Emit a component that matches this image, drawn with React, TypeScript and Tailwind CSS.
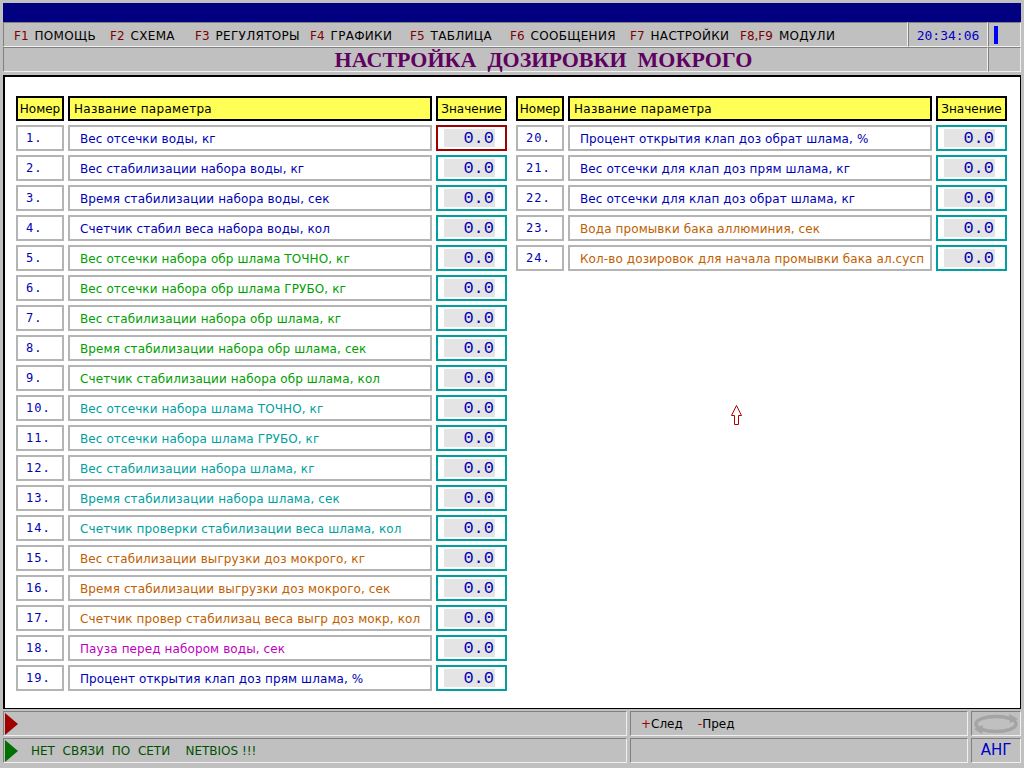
import React from "react";

type Row = { n: string; text: string; color: string };

const BLUE = "text-[#0000b4]";
const GREEN = "text-[#00a000]";
const TEAL = "text-[#00a0a0]";
const ORANGE = "text-[#c06000]";
const MAGENTA = "text-[#c000c0]";

const leftRows: Row[] = [
  { n: "1.", text: "Вес отсечки воды, кг", color: BLUE },
  { n: "2.", text: "Вес стабилизации набора воды, кг", color: BLUE },
  { n: "3.", text: "Время стабилизации набора воды, сек", color: BLUE },
  { n: "4.", text: "Счетчик стабил веса набора воды, кол", color: BLUE },
  { n: "5.", text: "Вес отсечки набора обр шлама ТОЧНО, кг", color: GREEN },
  { n: "6.", text: "Вес отсечки набора обр шлама ГРУБО, кг", color: GREEN },
  { n: "7.", text: "Вес стабилизации набора обр шлама, кг", color: GREEN },
  { n: "8.", text: "Время стабилизации набора обр шлама, сек", color: GREEN },
  { n: "9.", text: "Счетчик стабилизации набора обр шлама, кол", color: GREEN },
  { n: "10.", text: "Вес отсечки набора шлама ТОЧНО, кг", color: TEAL },
  { n: "11.", text: "Вес отсечки набора шлама ГРУБО, кг", color: TEAL },
  { n: "12.", text: "Вес стабилизации набора шлама, кг", color: TEAL },
  { n: "13.", text: "Время стабилизации набора шлама, сек", color: TEAL },
  { n: "14.", text: "Счетчик проверки стабилизации веса шлама, кол", color: TEAL },
  { n: "15.", text: "Вес стабилизации выгрузки доз мокрого, кг", color: ORANGE },
  { n: "16.", text: "Время стабилизации выгрузки доз мокрого, сек", color: ORANGE },
  { n: "17.", text: "Счетчик провер стабилизац веса выгр доз мокр, кол", color: ORANGE },
  { n: "18.", text: "Пауза перед набором воды, сек", color: MAGENTA },
  { n: "19.", text: "Процент открытия клап доз прям шлама, %", color: BLUE },
];

const rightRows: Row[] = [
  { n: "20.", text: "Процент открытия клап доз обрат шлама, %", color: BLUE },
  { n: "21.", text: "Вес отсечки для клап доз прям шлама, кг", color: BLUE },
  { n: "22.", text: "Вес отсечки для клап доз обрат шлама, кг", color: BLUE },
  { n: "23.", text: "Вода промывки бака аллюминия, сек", color: ORANGE },
  { n: "24.", text: "Кол-во дозировок для начала промывки бака ал.сусп", color: ORANGE },
];

const menu = [
  { k: "F1", label: "ПОМОЩЬ", w: "w-[96px]" },
  { k: "F2", label: "СХЕМА", w: "w-[85px]" },
  { k: "F3", label: "РЕГУЛЯТОРЫ", w: "w-[115px]" },
  { k: "F4", label: "ГРАФИКИ", w: "w-[100px]" },
  { k: "F5", label: "ТАБЛИЦА", w: "w-[100px]" },
  { k: "F6", label: "СООБЩЕНИЯ", w: "w-[120px]" },
  { k: "F7", label: "НАСТРОЙКИ", w: "w-[110px]" },
  { k: "F8,F9", label: "МОДУЛИ", w: "w-[120px]" },
];

const sunken = "border border-t-[#808080] border-l-[#808080] border-b-[#f0f0f0] border-r-[#f0f0f0]";

function Table({ rows, first }: { rows: Row[]; first?: boolean }) {
  return (
    <div className="flex flex-col gap-[4px] w-[491px]">
      <div className="flex gap-[4px] h-[26px] text-[12px] text-black pt-[1px]">
        <div className="w-[48px] border-2 border-black bg-[#ffff55] flex items-center justify-center">Номер</div>
        <div className="w-[364px] border-2 border-black bg-[#ffff55] flex items-center pl-[4px] tracking-[0.3px]">Название параметра</div>
        <div className="w-[71px] border-2 border-black bg-[#ffff55] flex items-center justify-center">Значение</div>
      </div>
      {rows.map((r, i) => (
        <div key={r.n} className="flex gap-[4px] h-[26px] text-[12px]">
          <div className="w-[48px] border-2 border-[#b4b4b4] flex items-center pl-[8px] text-[#0000b4] font-['DejaVu_Sans_Mono'] tracking-[1px]">
            {r.n}
          </div>
          <div className={`w-[364px] border-2 border-[#b4b4b4] flex items-center pl-[10px] pt-[1px] whitespace-nowrap tracking-[0.1px] ${r.color}`}>
            {r.text}
          </div>
          <div
            className={`w-[71px] border-2 flex items-center justify-end pr-[10px] ${
              first && i === 0 ? "border-[#a00000]" : "border-[#00a0a0]"
            }`}
          >
            <div className="w-[51px] h-[18px] bg-[#e4e4e4] flex items-center justify-end pr-[1px] text-[17px] leading-none text-[#0000b4] font-['Liberation_Mono']">
              0.0
            </div>
          </div>
        </div>
      ))}
    </div>
  );
}

export default function App() {
  return (
    <div className="relative w-[1024px] h-[768px] bg-[#c0c0c0] px-[3px] pt-[3px] flex flex-col font-['DejaVu_Sans'] overflow-hidden">
      <div className="h-[19px] bg-[#000080]" />

      <div className="flex h-[25px]">
        <div className={`flex-1 flex items-center pl-[10px] pt-[2px] text-[12px] ${sunken}`}>
          {menu.map((m) => (
            <div key={m.k} className={`${m.w} flex items-center gap-[6px] whitespace-nowrap`}>
              <span className="text-[#800000]">{m.k}</span>
              <span className="text-black tracking-[0.3px]">{m.label}</span>
            </div>
          ))}
        </div>
        <div className={`w-[80px] flex items-center justify-center pt-[2px] text-[13px] text-[#0000c8] font-['DejaVu_Sans_Mono'] ${sunken}`}>
          20:34:06
        </div>
        <div className={`w-[33px] flex items-center pl-[5px] ${sunken}`}>
          <div className="w-[4px] h-[18px] bg-[#0000ff]" />
        </div>
      </div>

      <div className="flex h-[25px]">
        <div className={`flex-1 flex items-center justify-center pl-[96px] ${sunken}`}>
          <span className="font-['Liberation_Serif'] font-bold text-[22px] leading-none text-[#600060] whitespace-pre">
            НАСТРОЙКА  ДОЗИРОВКИ  МОКРОГО
          </span>
        </div>
        <div className={`w-[33px] ${sunken}`} />
      </div>

      <div className="mt-[3px] h-[634px] bg-white border-2 border-black border-b border-r flex gap-[9px] pl-[11px] pt-[18px]">
        <Table rows={leftRows} first />
        <Table rows={rightRows} />
      </div>

      <div className="mt-[2px] flex h-[25px] gap-[3px]">
        <div className={`w-[624px] flex items-center pl-[1px] ${sunken}`}>
          <svg width="13" height="22" viewBox="0 0 13 22">
            <polygon points="0,0 13,11 0,22" fill="#a00000" />
          </svg>
        </div>
        <div className={`w-[338px] flex items-center pl-[10px] text-[12px] text-black ${sunken}`}>
          <span className="text-[#a00000]">+</span>
          <span>След</span>
          <span className="ml-[15px] text-[#a00000]">-</span>
          <span>Пред</span>
        </div>
        <div className={`flex-1 flex items-center justify-center ${sunken}`}>
          <svg width="46" height="22" viewBox="0 0 46 22">
            <ellipse cx="23" cy="11" rx="20" ry="7.5" fill="none" stroke="#a4a4a4" strokeWidth="3.5" />
            <polygon points="36,1 45,6 37,10" fill="#a4a4a4" />
            <polygon points="10,12 1,16 9,21" fill="#a4a4a4" />
          </svg>
        </div>
      </div>

      <div className="mt-[2px] flex h-[25px] gap-[3px]">
        <div className={`w-[624px] flex items-center pl-[1px] ${sunken}`}>
          <svg width="13" height="22" viewBox="0 0 13 22">
            <polygon points="0,0 13,11 0,22" fill="#007000" />
          </svg>
          <span className="ml-[13px] text-[12px] text-[#005000] whitespace-pre">НЕТ  СВЯЗИ  ПО  СЕТИ    NETBIOS !!!</span>
        </div>
        <div className={`w-[338px] ${sunken}`} />
        <div className={`flex-1 flex items-center justify-center text-[15px] text-[#0000c8] ${sunken}`}>АНГ</div>
      </div>

      <svg className="absolute left-[730px] top-[404px]" width="14" height="22" viewBox="0 0 14 22">
        <path d="M6.5 1.5 L1.5 11.5 L4.5 11.5 L4.5 20.5 L8.5 20.5 L8.5 11.5 L11.5 11.5 Z" fill="white" stroke="#b00000" strokeWidth="1" />
      </svg>
    </div>
  );
}
